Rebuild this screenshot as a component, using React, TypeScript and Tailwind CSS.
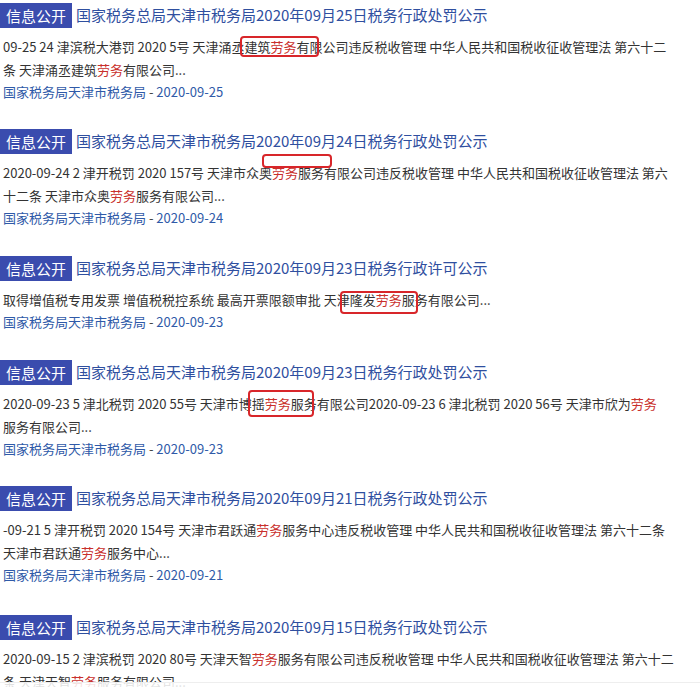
import * as React from "react";

interface Item {
  title: string;
  lines: string[];
  date: string;
  top: string;
}

const items: Item[] = [
  {
    title: "国家税务总局天津市税务局2020年09月25日税务行政处罚公示",
    lines: [
      "09-25 24 津滨税大港罚 2020 5号 天津涌丞建筑劳务有限公司违反税收管理 中华人民共和国税收征收管理法 第六十二",
      "条 天津涌丞建筑劳务有限公司...",
    ],
    date: "2020-09-25",
    top: "mt-0",
  },
  {
    title: "国家税务总局天津市税务局2020年09月24日税务行政处罚公示",
    lines: [
      "2020-09-24 2 津开税罚 2020 157号 天津市众奥劳务服务有限公司违反税收管理 中华人民共和国税收征收管理法 第六",
      "十二条 天津市众奥劳务服务有限公司...",
    ],
    date: "2020-09-24",
    top: "mt-0",
  },
  {
    title: "国家税务总局天津市税务局2020年09月23日税务行政许可公示",
    lines: ["取得增值税专用发票 增值税税控系统 最高开票限额审批 天津隆发劳务服务有限公司..."],
    date: "2020-09-23",
    top: "mt-[1px]",
  },
  {
    title: "国家税务总局天津市税务局2020年09月23日税务行政处罚公示",
    lines: [
      "2020-09-23 5 津北税罚 2020 55号 天津市博摇劳务服务有限公司2020-09-23 6 津北税罚 2020 56号 天津市欣为劳务",
      "服务有限公司...",
    ],
    date: "2020-09-23",
    top: "mt-[1px]",
  },
  {
    title: "国家税务总局天津市税务局2020年09月21日税务行政处罚公示",
    lines: [
      "-09-21 5 津开税罚 2020 154号 天津市君跃通劳务服务中心违反税收管理 中华人民共和国税收征收管理法 第六十二条",
      "天津市君跃通劳务服务中心...",
    ],
    date: "2020-09-21",
    top: "mt-0",
  },
  {
    title: "国家税务总局天津市税务局2020年09月15日税务行政处罚公示",
    lines: [
      "2020-09-15 2 津滨税罚 2020 80号 天津天智劳务服务有限公司违反税收管理 中华人民共和国税收征收管理法 第六十二",
      "条 天津天智劳务服务有限公司...",
    ],
    date: "2020-09-15",
    top: "mt-[3px]",
  },
];

const Highlight: React.FC<{ text: string }> = ({ text }) => {
  const parts = text.split("劳务");
  return (
    <>
      {parts.map((p, i) => (
        <React.Fragment key={i}>
          {p}
          {i < parts.length - 1 && <span className="text-[#c9302c]">劳务</span>}
        </React.Fragment>
      ))}
    </>
  );
};

export default function App() {
  return (
    <div className="relative w-[700px] h-[687px] overflow-hidden bg-white font-['Noto_Sans_CJK_SC',sans-serif]">
      <div className="flex flex-col pt-[2px]">
        {items.map((item, idx) => (
          <div key={idx} className={"flex flex-col pb-[25px] " + item.top}>
            <div className="flex items-center h-[26px]">
              <span className="flex items-center h-[25px] px-[6px] bg-[#3a4cae] text-white text-[15px] leading-none">
                信息公开
              </span>
              <span className="ml-[4px] text-[15px] text-[#2f4f9f] whitespace-nowrap">{item.title}</span>
            </div>
            <div className="mt-[7px] pl-[3px] text-[13px] leading-[23px] text-[#333]">
              {item.lines.map((l, i) => (
                <div key={i} className="whitespace-nowrap">
                  <Highlight text={l} />
                </div>
              ))}
            </div>
            <div className="pl-[3px] text-[13px] leading-[22px] text-[#2f5aa8] whitespace-nowrap">
              国家税务局天津市税务局 <span className="text-[#444]">-</span> {item.date}
            </div>
          </div>
        ))}
      </div>

      {/* red annotation boxes */}
      <div className="absolute left-[240px] top-[36px] w-[79px] h-[21px] rounded-[4px] border-[2.5px] border-[#d8262a]" />
      <div className="absolute left-[262px] top-[154px] w-[70px] h-[14px] rounded-[4px] border-[2.5px] border-[#d8262a]" />
      <div className="absolute left-[340px] top-[291px] w-[78px] h-[23px] rounded-[4px] border-[2.5px] border-[#d8262a]" />
      <div className="absolute left-[248px] top-[390px] w-[66px] h-[27px] rounded-[4px] border-[2.5px] border-[#d8262a]" />

      <div className="absolute left-0 bottom-0 w-full h-[5px] bg-white/85 border-t border-[#eeeeee]" />
    </div>
  );
}
